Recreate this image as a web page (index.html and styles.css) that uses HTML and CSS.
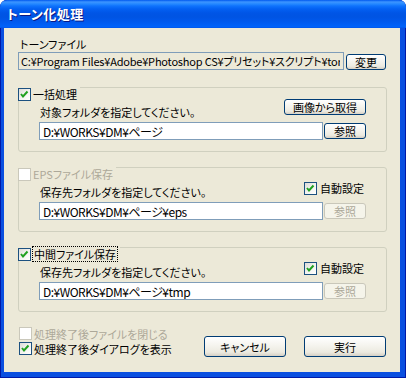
FILE: index.html
```html
<!DOCTYPE html>
<html lang="ja">
<head>
    <meta charset="UTF-8">
    <title>トーン化処理</title>
    <link rel="stylesheet" href="styles.css">
</head>
<body>
    <div class="window">
        <div class="titlebar"><span class="title">トーン化処理</span></div>
        <div class="client">
            <div class="tone">
                <div class="label">トーンファイル</div>
                <div class="field-row">
                    <input class="edit readonly" type="text" value="C:¥Program Files¥Adobe¥Photoshop CS¥プリセット¥スクリプト¥tone.psd" readonly>
                    <button class="btn change">変更</button>
                </div>
            </div>

            <div class="group">
                <div class="group-title">
                    <span class="cb"><svg width="11" height="11" viewBox="0 0 11 11"><polyline points="2,5 4,7.5 8.5,2.5" /></svg></span>
                    <span>一括処理</span>
                </div>
                <div class="group-row">
                    <span class="hint">対象フォルダを指定してください。</span>
                    <button class="btn wide">画像から取得</button>
                </div>
                <div class="field-row">
                    <input class="edit" type="text" value="D:¥WORKS¥DM¥ページ">
                    <button class="btn browse">参照</button>
                </div>
            </div>

            <div class="group">
                <div class="group-title disabled">
                    <span class="cb off"></span>
                    <span>EPSファイル保存</span>
                </div>
                <div class="group-row">
                    <span class="hint">保存先フォルダを指定してください。</span>
                    <span class="autoset">
                        <span class="cb"><svg width="11" height="11" viewBox="0 0 11 11"><polyline points="2,5 4,7.5 8.5,2.5" /></svg></span>
                        <span>自動設定</span>
                    </span>
                </div>
                <div class="field-row">
                    <input class="edit" type="text" value="D:¥WORKS¥DM¥ページ¥eps">
                    <button class="btn browse" disabled>参照</button>
                </div>
            </div>

            <div class="group">
                <div class="group-title">
                    <span class="cb"><svg width="11" height="11" viewBox="0 0 11 11"><polyline points="2,5 4,7.5 8.5,2.5" /></svg></span>
                    <span class="focus">中間ファイル保存</span>
                </div>
                <div class="group-row">
                    <span class="hint">保存先フォルダを指定してください。</span>
                    <span class="autoset">
                        <span class="cb"><svg width="11" height="11" viewBox="0 0 11 11"><polyline points="2,5 4,7.5 8.5,2.5" /></svg></span>
                        <span>自動設定</span>
                    </span>
                </div>
                <div class="field-row">
                    <input class="edit" type="text" value="D:¥WORKS¥DM¥ページ¥tmp">
                    <button class="btn browse" disabled>参照</button>
                </div>
            </div>

            <div class="footer">
                <div class="options">
                    <div class="check disabled"><span class="cb off"></span><span>処理終了後ファイルを閉じる</span></div>
                    <div class="check"><span class="cb"><svg width="11" height="11" viewBox="0 0 11 11"><polyline points="2,5 4,7.5 8.5,2.5" /></svg></span><span>処理終了後ダイアログを表示</span></div>
                </div>
                <div class="actions">
                    <button class="btn action">キャンセル</button>
                    <button class="btn action">実行</button>
                </div>
            </div>
        </div>
    </div>
</body>
</html>
```

FILE: styles.css
```css
body {
    margin: 0;
    background: #fff;
    font-family: "Noto Sans CJK JP", sans-serif;
    font-size: 11px;
    font-feature-settings: "palt";
}
.window {
    width: 406px;
    height: 378px;
    box-sizing: border-box;
    display: flex;
    flex-direction: column;
    background: #0a4fe0;
    border-radius: 7px 7px 0 0;
    box-shadow: inset 0 0 0 1px #0019a8;
    overflow: hidden;
}
.titlebar {
    height: 28px;
    flex: none;
    box-sizing: border-box;
    padding: 6px 0 0 7px;
    background: linear-gradient(to bottom, #0058ee 0, #3d95ff 2px, #2488ff 4px, #0e72fc 6px, #0360f2 9px, #0055e6 13px, #0054e3 17px, #0058ec 21px, #005ff6 25px, #0063fa 27px, #0050e6 28px);
}
.title {
    color: #fff;
    font-weight: bold;
    font-size: 13px;
    line-height: 16px;
    letter-spacing: 0.5px;
    text-shadow: 1px 1px 0 #0a1883;
}
.client {
    flex: 1;
    margin: 0 6px 6px 4px;
    background: #ece9d8;
    padding: 0 13px 0 14px;
    color: #000;
}
.tone {
    padding-top: 9px;
}
.label {
    line-height: 14px;
    padding-left: 2px;
}
.field-row {
    display: flex;
    align-items: center;
    gap: 1px;
    margin-top: 1px;
}
.tone .field-row {
    gap: 2px;
    align-items: flex-end;
}
.edit {
    font: inherit;
    font-size: 12px;
    font-feature-settings: "palt";
    letter-spacing: -0.5px;
    height: 18px;
    box-sizing: border-box;
    border: 1px solid #7f9db9;
    background: #fff;
    padding: 0 3px;
    color: #000;
    outline: none;
    line-height: 16px;
}
.edit.readonly {
    width: 326px;
    background: #ece9d8;
    padding-left: 2px;
    letter-spacing: -0.2px;
    font-size: 11px;
}
.group .edit {
    width: 284px;
}
.btn {
    font: inherit;
    font-feature-settings: "palt";
    height: 16px;
    box-sizing: border-box;
    padding: 0;
    line-height: 14px;
    color: #000;
    border: 1px solid #003c74;
    border-radius: 3px;
    background: linear-gradient(to bottom, #ffffff 0, #f6f5f0 40%, #eceae0 80%, #d6d0c5 100%);
}
.btn:disabled {
    color: #aca899;
    border-color: #c9c7ba;
    background: #f5f4ea;
}
.change {
    width: 40px;
}
.browse {
    width: 42px;
}
.wide {
    width: 82px;
}
.group {
    margin-top: 15px;
    border: 1px solid #d0d0bf;
    border-radius: 3px;
    padding: 0 20px 11px 20px;
}
.tone + .group {
    margin-top: 17px;
}
.group-title {
    display: flex;
    align-items: center;
    gap: 2px;
    width: fit-content;
    height: 14px;
    margin: -1px 0 0 -21px;
    padding-right: 3px;
    background: #ece9d8;
    line-height: 14px;
}
.group-title.disabled,
.check.disabled {
    color: #aca899;
}
.focus {
    outline: 1px dotted #000;
    outline-offset: 0;
    padding: 0 1px;
}
.cb {
    width: 13px;
    height: 13px;
    flex: none;
    box-sizing: border-box;
    border: 1px solid #1c5180;
    background: linear-gradient(135deg, #dcdcd7 0, #f2f2ef 50%, #ffffff 100%);
    display: flex;
    align-items: center;
    justify-content: center;
}
.cb svg polyline {
    fill: none;
    stroke: #21a121;
    stroke-width: 2;
}
.cb.off {
    border-color: #cac8bb;
    background: #fff;
}
.group-row {
    display: flex;
    justify-content: space-between;
    height: 21px;
    margin-top: -2px;
}
.hint {
    align-self: flex-end;
    line-height: 14px;
    padding-left: 1px;
    margin-bottom: 1px;
}
.wide {
    align-self: flex-start;
}
.autoset {
    align-self: flex-start;
    display: flex;
    align-items: center;
    gap: 3px;
    margin-top: 2px;
    margin-right: 2px;
    line-height: 14px;
}
.group-row + .field-row {
    margin-top: 2px;
}
.footer {
    display: flex;
    margin-top: 14px;
    padding-left: 1px;
}
.check {
    display: flex;
    align-items: center;
    gap: 2px;
    height: 15px;
    line-height: 14px;
}
.actions {
    display: flex;
    gap: 18px;
    margin: 10px 1px 0 auto;
}
.action {
    width: 82px;
    height: 21px;
}
```
